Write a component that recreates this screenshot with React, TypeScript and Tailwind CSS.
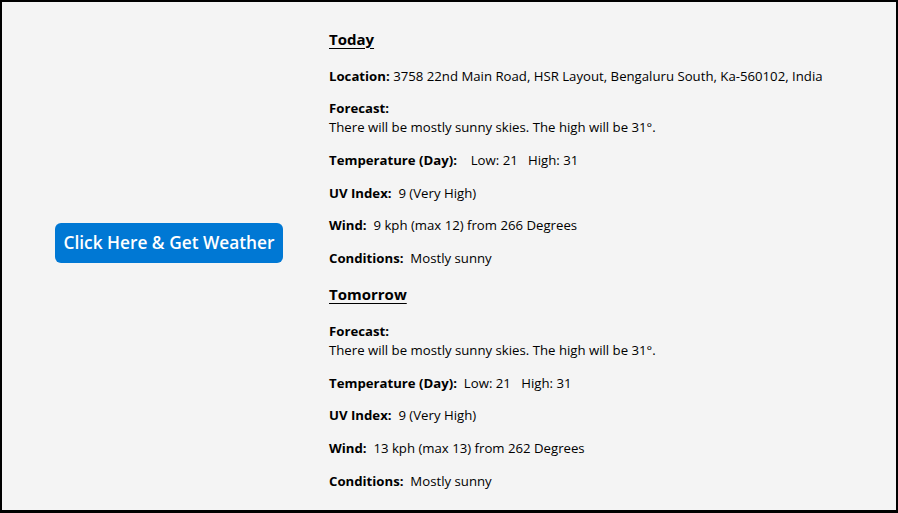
import { useState } from "react";

type Day = {
  title: string;
  location?: string;
  forecast: string;
  tempGap: string;
  low: number;
  high: number;
  uv: string;
  wind: string;
  conditions: string;
};

const days: Day[] = [
  {
    title: "Today",
    location: "3758 22nd Main Road, HSR Layout, Bengaluru South, Ka-560102, India",
    forecast: "There will be mostly sunny skies. The high will be 31°.",
    tempGap: "\u00a0\u00a0\u00a0\u00a0",
    low: 21,
    high: 31,
    uv: "9 (Very High)",
    wind: "9 kph (max 12) from 266 Degrees",
    conditions: "Mostly sunny",
  },
  {
    title: "Tomorrow",
    forecast: "There will be mostly sunny skies. The high will be 31°.",
    tempGap: "\u00a0\u00a0",
    low: 21,
    high: 31,
    uv: "9 (Very High)",
    wind: "13 kph (max 13) from 262 Degrees",
    conditions: "Mostly sunny",
  },
];

function Row({ label, children }: { label: string; children: React.ReactNode }) {
  return (
    <p className="leading-[19px]">
      <b className="font-bold">{label}</b>
      {children}
    </p>
  );
}

function DaySection({ day }: { day: Day }) {
  return (
    <section className="flex flex-col gap-[13.7px]">
      <h2 className="text-[15px] leading-[22px] font-bold underline underline-offset-[3px] mb-[3px]">{day.title}</h2>
      {day.location && <Row label="Location:">{" " + day.location}</Row>}
      <div className="leading-[19px]">
        <b className="font-bold block">Forecast:</b>
        <span>{day.forecast}</span>
      </div>
      <Row label="Temperature (Day):">
        {day.tempGap}Low: {day.low}{"\u00a0\u00a0\u00a0"}High: {day.high}
      </Row>
      <Row label="UV Index:">{"\u00a0\u00a0" + day.uv}</Row>
      <Row label="Wind:">{"\u00a0\u00a0" + day.wind}</Row>
      <Row label="Conditions:">{"\u00a0\u00a0" + day.conditions}</Row>
    </section>
  );
}

export default function App() {
  const [clicks, setClicks] = useState(0);

  return (
    <div
      className="h-screen w-screen overflow-hidden border-2 border-b-[3px] border-black bg-[#f4f4f4] text-[13.2px] text-black flex"
      style={{ fontFamily: '"Segoe UI", "Open Sans", sans-serif' }}
    >
      <div className="w-[327px] shrink-0 flex items-center justify-center pl-[7px] pb-[26px]">
        <button
          onClick={() => setClicks(clicks + 1)}
          className="h-[40px] w-[228px] rounded-[6px] bg-[#0078d4] text-white text-[17.3px] font-semibold hover:bg-[#106ebe]"
        >
          Click Here &amp; Get Weather
        </button>
      </div>
      <div className="flex flex-col gap-[15px] pt-[26px]">
        {days.map((d) => (
          <DaySection key={d.title} day={d} />
        ))}
      </div>
    </div>
  );
}
